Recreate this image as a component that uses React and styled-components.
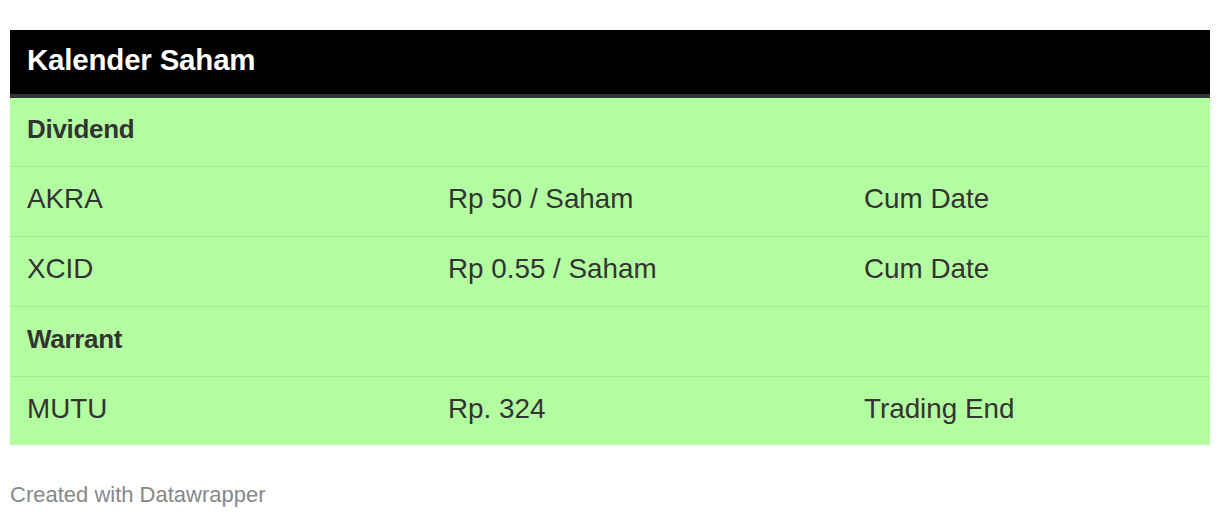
import styled, { createGlobalStyle } from "styled-components";

const GlobalStyle = createGlobalStyle`
  body {
    margin: 0;
    background: #fff;
    font-family: "Liberation Sans", Arial, sans-serif;
  }
`;

const Page = styled.div`
  padding: 30px 10px 0;
`;

const Title = styled.div`
  background: #000;
  color: #fff;
  height: 59px;
  display: flex;
  align-items: center;
  padding: 0 17px 5px;
  font-size: 29.5px;
  font-weight: 700;
  letter-spacing: -0.2px;
  border-bottom: 4px solid #333;
`;

const Table = styled.div`
  background: #b3fea0;
  color: #333;
`;

const Row = styled.div`
  display: grid;
  grid-template-columns: 421px 416px 1fr;
  align-items: center;
  box-sizing: border-box;
  padding-bottom: 5px;
  border-bottom: ${(p) => (p.last ? "none" : "1px solid #a2ea90")};
  height: ${(p) => (p.first ? "69px" : p.last ? "68px" : "70px")};
`;

const Cell = styled.div`
  padding: 0 17px;
  font-size: ${(p) => (p.bold ? "26px" : "27.8px")};
  font-weight: ${(p) => (p.bold ? 700 : 400)};
  letter-spacing: ${(p) => (p.bold ? "-0.3px" : "0")};
  white-space: nowrap;
`;

const Footer = styled.div`
  margin-top: 37px;
  font-size: 22px;
  color: #888;
`;

const sections = [
  {
    name: "Dividend",
    rows: [
      ["AKRA", "Rp 50 / Saham", "Cum Date"],
      ["XCID", "Rp 0.55 / Saham", "Cum Date"],
    ],
  },
  {
    name: "Warrant",
    rows: [["MUTU", "Rp. 324", "Trading End"]],
  },
];

export default function App() {
  const lines = [];
  sections.forEach((s) => {
    lines.push({ head: true, cells: [s.name] });
    s.rows.forEach((r) => lines.push({ head: false, cells: r }));
  });

  return (
    <Page>
      <GlobalStyle />
      <Title>Kalender Saham</Title>
      <Table>
        {lines.map((line, i) => (
          <Row key={i} first={i === 0} last={i === lines.length - 1}>
            {line.cells.map((c, j) => (
              <Cell key={j} bold={line.head}>
                {c}
              </Cell>
            ))}
          </Row>
        ))}
      </Table>
      <Footer>Created with Datawrapper</Footer>
    </Page>
  );
}
